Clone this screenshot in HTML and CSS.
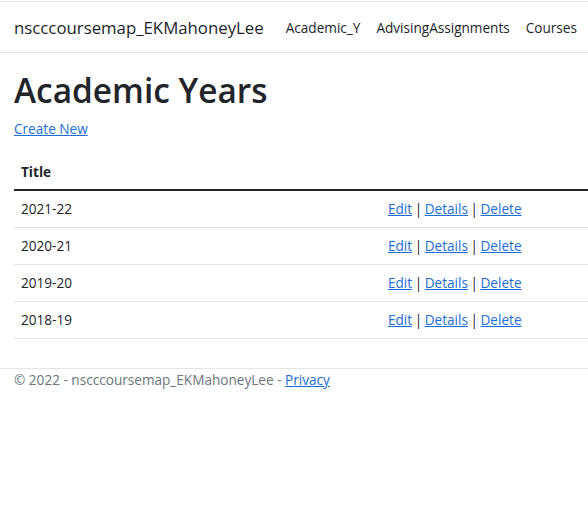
FILE: index.html
```html
<!DOCTYPE html>
<html lang="en">
<head>
<meta charset="utf-8">
<title>Academic Years - nscccoursemap_EKMahoneyLee</title>
<link rel="stylesheet" href="styles.css">
</head>
<body>
<header class="navbar">
  <a class="brand" href="#">nscccoursemap_EKMahoneyLee</a>
  <nav class="nav">
    <a class="nav-link" href="#">Academic_Y</a>
    <a class="nav-link" href="#">AdvisingAssignments</a>
    <a class="nav-link" href="#">Courses</a>
  </nav>
</header>
<main class="container">
  <h1 class="title">Academic Years</h1>
  <p class="create"><a href="#">Create New</a></p>
  <table class="table">
    <thead>
      <tr><th class="col-title">Title</th><th></th></tr>
    </thead>
    <tbody>
      <tr><td>2021-22</td><td class="actions"><a href="#">Edit</a> | <a href="#">Details</a> | <a href="#">Delete</a></td></tr>
      <tr><td>2020-21</td><td class="actions"><a href="#">Edit</a> | <a href="#">Details</a> | <a href="#">Delete</a></td></tr>
      <tr><td>2019-20</td><td class="actions"><a href="#">Edit</a> | <a href="#">Details</a> | <a href="#">Delete</a></td></tr>
      <tr><td>2018-19</td><td class="actions"><a href="#">Edit</a> | <a href="#">Details</a> | <a href="#">Delete</a></td></tr>
    </tbody>
  </table>
</main>
<footer class="footer">
  <div class="footer-inner">&copy; 2022 - nscccoursemap_EKMahoneyLee - <a href="#">Privacy</a></div>
</footer>
</body>
</html>
```

FILE: styles.css
```css
html, body {
  margin: 0;
  padding: 0;
  background: #fff;
  overflow: hidden;
}
body {
  font-family: "Open Sans", "Noto Sans", sans-serif;
  font-size: 13.6px;
  line-height: 21px;
  color: #212529;
  width: 588px;
}
a {
  color: #1b6ed8;
}
.navbar {
  display: flex;
  align-items: center;
  height: 50px;
  border-top: 1px solid #e5e5e5;
  border-bottom: 1px solid #e5e5e5;
  margin-top: 1px;
  padding: 0 14px;
  box-sizing: content-box;
  white-space: nowrap;
  overflow: hidden;
}
.brand {
  font-size: 16.8px;
  color: #212529;
  text-decoration: none;
  margin-right: 14px;
}
.nav {
  display: flex;
}
.nav-link {
  color: #212529;
  text-decoration: none;
  padding: 0 8px;
}
.container {
  padding: 0 14px;
  margin-top: 16px;
}
.title {
  font-size: 33.4px;
  font-weight: 600;
  line-height: 42px;
  margin: 0 0 7px 0;
}
.create {
  margin: 0 0 14px 0;
}
.table {
  border-collapse: collapse;
  width: 740px;
  margin-bottom: 29px;
}
.table th, .table td {
  text-align: left;
  padding: 8px 7px;
  line-height: 20px;
  border-bottom: 1px solid #dee2e6;
  vertical-align: top;
}
.table th {
  font-weight: 700;
  padding-top: 9px;
  padding-bottom: 7px;
  border-bottom: 2px solid #212529;
}
.col-title {
  width: 353px;
}
.actions {
  word-spacing: -1px;
}
.footer {
  border-top: 1px solid #e5e5e5;
  color: #6c757d;
  padding: 0 14px;
}
```
